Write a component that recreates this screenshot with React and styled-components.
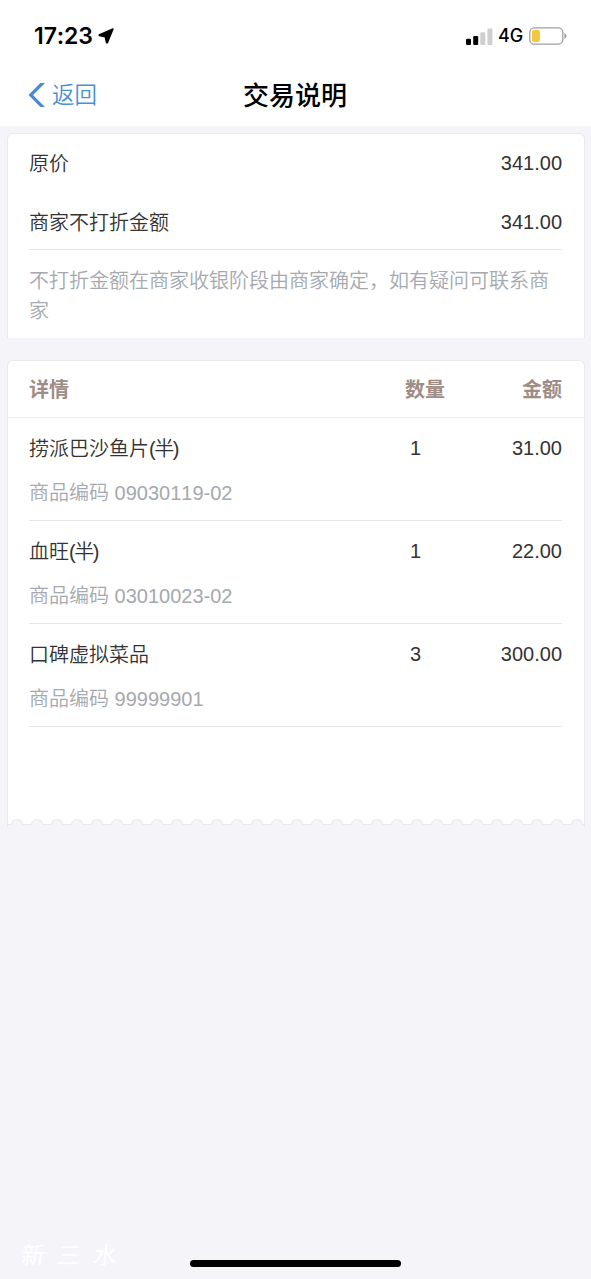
import React from "react";
import styled, { createGlobalStyle } from "styled-components";

const items = [
  { name: "捞派巴沙鱼片", portion: "(半)", code: "09030119-02", count: 1, amount: "31.00" },
  { name: "血旺", portion: "(半)", code: "03010023-02", count: 1, amount: "22.00" },
  { name: "口碑虚拟菜品", code: "99999901", count: 3, amount: "300.00" },
];

const App = () => {
  return (
    <Page>
      <GlobalStyle />
      <StatusBar>
        <Time>17:23</Time>
        <LocationIcon viewBox="0 0 16 16">
          <path d="M15 1 L1.2 6.8 L1.2 7.6 L7.2 8.8 L8.6 14.8 L9.4 14.8 Z" />
        </LocationIcon>
        <StatusRight>
          <SignalIcon viewBox="0 0 27 17">
            <rect x="0" y="10.7" width="5" height="6.3" rx="1.2" />
            <rect x="7.2" y="8" width="5" height="9" rx="1.2" />
            <rect x="14.3" y="4.2" width="5" height="12.8" rx="1.2" fill="#cfcfcf" />
            <rect x="21.4" y="0.5" width="5" height="16.5" rx="1.2" fill="#cfcfcf" />
          </SignalIcon>
          <Network>4G</Network>
          <BatteryIcon viewBox="0 0 38 18">
            <rect x="0.8" y="0.8" width="33" height="16.4" rx="4.5" fill="none" stroke="#a0a0a0" strokeWidth="1.3" />
            <rect x="3" y="3" width="8" height="12" rx="2" fill="#f3c840" />
            <path d="M35.4 6 Q37.5 7 37.5 9 Q37.5 11 35.4 12 Z" fill="#a0a0a0" />
          </BatteryIcon>
        </StatusRight>
      </StatusBar>
      <NavBar>
        <Back>
          <BackIcon viewBox="0 0 17 26">
            <path d="M12.4 1 H17 L5 13 L17 25 H12.4 L0.5 13 Z" />
          </BackIcon>
          返回
        </Back>
        <Title>交易说明</Title>
      </NavBar>

      <Summary>
        <SummaryRow>
          <Label>原价</Label>
          <span>341.00</span>
        </SummaryRow>
        <SummaryRow>
          <Label>商家不打折金额</Label>
          <span>341.00</span>
        </SummaryRow>
        <Note>不打折金额在商家收银阶段由商家确定，如有疑问可联系商家</Note>
      </Summary>

      <Details>
        <DetailsHead>
          <span>详情</span>
          <span>数量</span>
          <Amount>金额</Amount>
        </DetailsHead>
        {items.map((item) => (
          <Item key={item.code}>
            <ItemRow>
              <Label>
                {item.name}
                {item.portion ? <Portion>{item.portion}</Portion> : null}
              </Label>
              <Count>{item.count}</Count>
              <Amount>{item.amount}</Amount>
            </ItemRow>
            <Code>
              <Label>商品编码</Label> {item.code}
            </Code>
          </Item>
        ))}
        <Perforation />
      </Details>

      <Footer>
        <Watermark>
          <span>新</span>
          <span>三</span>
          <span>水</span>
        </Watermark>
        <HomeIndicator />
      </Footer>
    </Page>
  );
};

export default App;

const GlobalStyle = createGlobalStyle`
  * {
    box-sizing: border-box;
  }
  body {
    margin: 0;
    background: #f4f4f9;
  }
`;

const Page = styled.div`
  display: flex;
  flex-direction: column;
  width: 591px;
  height: 1279px;
  overflow: hidden;
  background: #f4f4f9;
  color: #333;
  font-family: "Liberation Sans", "Noto Sans CJK SC", sans-serif;
  font-size: 20px;
  font-kerning: none;
  line-height: 30px;
`;

const StatusBar = styled.div`
  display: flex;
  align-items: center;
  flex-shrink: 0;
  height: 63px;
  padding: 9px 24px 0 34px;
  background: #fff;
`;

const Time = styled.span`
  width: 59px;
  color: #000;
  font-family: Inter, sans-serif;
  font-size: 23px;
  font-weight: 600;
  letter-spacing: -0.1px;
  white-space: nowrap;
`;

const LocationIcon = styled.svg`
  width: 16px;
  height: 16px;
  margin-left: 5px;
  stroke: #000;
  stroke-width: 1.4;
  stroke-linejoin: round;
`;

const StatusRight = styled.div`
  display: flex;
  align-items: center;
  margin-left: auto;
`;

const SignalIcon = styled.svg`
  width: 27px;
  height: 17px;
`;

const Network = styled.span`
  width: 26px;
  margin: 0 5px 0 5px;
  color: #000;
  font-family: Inter, sans-serif;
  font-size: 18px;
  font-weight: 500;
`;

const BatteryIcon = styled.svg`
  width: 38px;
  height: 18px;
`;

const NavBar = styled.div`
  display: grid;
  grid-template-columns: 1fr auto 1fr;
  align-items: center;
  flex-shrink: 0;
  height: 63px;
  padding: 2px 29px 0 28px;
  background: #fff;
`;

const Back = styled.div`
  display: flex;
  align-items: center;
  color: #4a8fd8;
  font-size: 22.5px;
  font-weight: 350;
`;

const BackIcon = styled.svg`
  width: 17px;
  height: 26px;
  margin: -2px 7px 0 0;
  fill: #4a8ad4;
`;

const Title = styled.div`
  color: #000;
  font-size: 26px;
  font-weight: 500;
`;

const Card = styled.section`
  flex-shrink: 0;
  margin: 0 6px 0 7px;
  background: #fff;
  border: 1px solid #e9e9ed;
  border-bottom: none;
  border-radius: 6px 6px 0 0;
`;

const Summary = styled(Card)`
  height: 205px;
  margin-top: 7px;
  padding: 0 22px 0 21px;
`;

const Label = styled.span`
  padding-top: 1px;
  font-weight: 350;
`;

const SummaryRow = styled.div`
  display: flex;
  justify-content: space-between;
  align-items: center;
  height: 58px;
  & + & {
    height: 57px;
    padding-top: 3px;
  }
`;

const Note = styled.p`
  margin: 0;
  padding-top: 16px;
  border-top: 1px solid #e5e5e5;
  color: #a5a9b0;
  font-weight: 350;
`;

const Details = styled(Card)`
  display: flex;
  flex-direction: column;
  height: 467px;
  margin-top: 22px;
`;

const DetailsHead = styled.div`
  display: grid;
  grid-template-columns: 1fr 61px 96px;
  align-items: center;
  height: 57px;
  padding: 1px 22px 0 21px;
  border-bottom: 1px solid #ededed;
  color: #a08c86;
  font-weight: 700;
`;

const Item = styled.div`
  height: 103px;
  margin: 0 22px 0 21px;
  padding-top: 15px;
  border-bottom: 1px solid #e5e5e5;
`;

const ItemRow = styled.div`
  display: grid;
  grid-template-columns: 1fr 61px 96px;
`;

const Portion = styled.span`
  letter-spacing: -1.4px;
`;

const Count = styled.span`
  padding-left: 5px;
`;

const Amount = styled.span`
  text-align: right;
`;

const Code = styled.div`
  margin-top: 14px;
  color: #a5a9b0;
`;

const Perforation = styled.div`
  height: 8px;
  margin: auto -1px 0;
  border: 1px solid #e9e9ed;
  border-width: 0 1px;
  background:
    radial-gradient(
        circle at 9px 6px,
        #f4f4f9 4.6px,
        #ebebee 5.3px,
        #ebebee 5.7px,
        transparent 6.4px
      )
      0 0 / 20px 6px repeat-x,
    linear-gradient(
      transparent 5px,
      #ebebee 5px,
      #ebebee 6px,
      #f4f4f9 6px
    );
`;

const Footer = styled.footer`
  position: relative;
  flex: 1;
  display: flex;
  justify-content: center;
  align-items: flex-end;
  padding-bottom: 12px;
`;

const HomeIndicator = styled.div`
  width: 211px;
  height: 7px;
  border-radius: 4px;
  background: #000;
`;

const Watermark = styled.div`
  position: absolute;
  left: 21px;
  bottom: 8px;
  display: flex;
  gap: 12px;
  color: #fff;
  font-size: 24px;
  font-weight: 400;
  transform: skewX(-6deg);
`;
